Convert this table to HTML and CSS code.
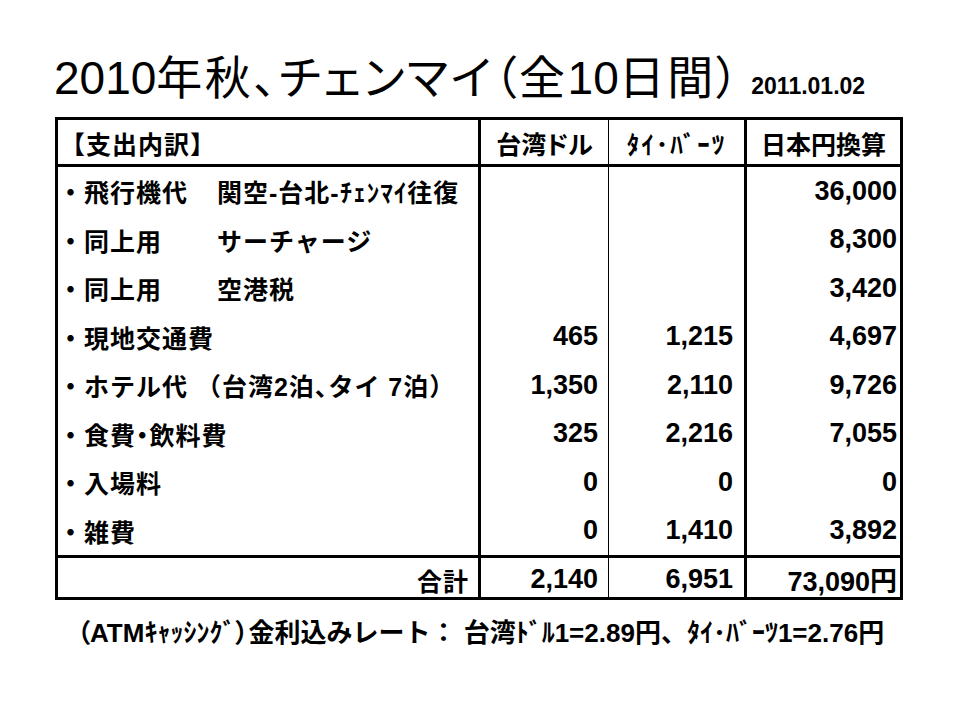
FILE: index.html
```html
<!DOCTYPE html>
<html lang="ja">
<head>
<meta charset="utf-8">
<title>2010年秋、チェンマイ（全10日間）</title>
<link rel="stylesheet" href="styles.css">
</head>
<body>
<h1 class="title"><span class="title-main"><span class="tdig">2010</span>年秋、チェンマイ（全<span class="tdig">10</span>日間）</span><span class="date">2011.01.02</span></h1>
<div class="sheet">
  <div class="cell c1 head label-head">【支出内訳】</div>
  <div class="cell c2 head center prop">台湾ドル</div>
  <div class="cell c3 head center wide">ﾀｲ･ﾊﾞｰﾂ</div>
  <div class="cell c4 head center">日本円換算</div>

  <div class="cell c1"><span class="item">・飛行機代</span><span class="sub">関空-台北-ﾁｪﾝﾏｲ往復</span></div>
  <div class="cell c2 num"></div>
  <div class="cell c3 num"></div>
  <div class="cell c4 num">36,000</div>

  <div class="cell c1"><span class="item">・同上用</span><span class="sub">サーチャージ</span></div>
  <div class="cell c2 num"></div>
  <div class="cell c3 num"></div>
  <div class="cell c4 num">8,300</div>

  <div class="cell c1"><span class="item">・同上用</span><span class="sub">空港税</span></div>
  <div class="cell c2 num"></div>
  <div class="cell c3 num"></div>
  <div class="cell c4 num">3,420</div>

  <div class="cell c1"><span>・現地交通費</span></div>
  <div class="cell c2 num">465</div>
  <div class="cell c3 num">1,215</div>
  <div class="cell c4 num">4,697</div>

  <div class="cell c1"><span>・ホテル代 （台湾2泊<span class="prop">、</span>タイ 7泊）</span></div>
  <div class="cell c2 num">1,350</div>
  <div class="cell c3 num">2,110</div>
  <div class="cell c4 num">9,726</div>

  <div class="cell c1"><span>・食費<span class="prop">・</span>飲料費</span></div>
  <div class="cell c2 num">325</div>
  <div class="cell c3 num">2,216</div>
  <div class="cell c4 num">7,055</div>

  <div class="cell c1"><span>・入場料</span></div>
  <div class="cell c2 num">0</div>
  <div class="cell c3 num">0</div>
  <div class="cell c4 num">0</div>

  <div class="cell c1 last"><span>・雑費</span></div>
  <div class="cell c2 num last">0</div>
  <div class="cell c3 num last">1,410</div>
  <div class="cell c4 num last">3,892</div>

  <div class="cell c1 total">合計</div>
  <div class="cell c2 num total">2,140</div>
  <div class="cell c3 num total">6,951</div>
  <div class="cell c4 num total">73,090円</div>
</div>
<p class="note"><span class="prop">（</span>ATMｷｬｯｼﾝｸﾞ<span class="prop">）</span>金利込みレート： 台湾ﾄﾞﾙ1=2.89円、ﾀｲ･ﾊﾞｰﾂ1=2.76円</p>
</body>
</html>
```

FILE: styles.css
```css
html, body {
  margin: 0;
  padding: 0;
  background: #ffffff;
  color: #000000;
}

body {
  width: 960px;
  height: 720px;
  font-family: "Liberation Sans", "Noto Sans CJK JP", sans-serif;
}

.title {
  margin: 0;
  padding: 52px 0 0 54px;
  height: 52px;
  line-height: 52px;
  font-size: 46px;
  font-weight: normal;
  white-space: nowrap;
}

.title-main {
  font-feature-settings: "palt";
  letter-spacing: 2.5px;
}

.tdig {
  letter-spacing: 0;
}

.date {
  font-size: 23px;
  font-weight: bold;
  margin-left: 10px;
}

.sheet {
  box-sizing: border-box;
  margin: 13px 0 0 55px;
  width: 848px;
  display: grid;
  grid-template-columns: 423px 128px 138px 156px;
  grid-template-rows: 47px repeat(7, 48.5px) 51.5px 42px;
  border-left: 3px solid #000;
  border-top: 3px solid #000;
  font-weight: bold;
  font-size: 25px;
}

.cell {
  box-sizing: border-box;
  display: flex;
  align-items: center;
  white-space: nowrap;
  border-right: 3px solid #000;
}

.c2 {
  border-right: 1px solid #000;
  padding-right: 10px;
}

.c3 {
  padding-right: 11px;
}

.c4 {
  padding-right: 3px;
}

.head {
  border-bottom: 3px solid #000;
  padding-top: 1px;
}

.label-head {
  padding-left: 2px;
}

.center {
  justify-content: center;
  padding-right: 0;
}

.prop {
  font-feature-settings: "palt";
}

.wide {
  letter-spacing: 2px;
}

.c1 {
  letter-spacing: 1px;
}

.item {
  display: inline-block;
  width: 159px;
}

.num {
  justify-content: flex-end;
  font-size: 27px;
}

.last {
  border-bottom: 3px solid #000;
}

.total {
  border-bottom: 3px solid #000;
  padding-top: 4px;
}

.c1.total {
  justify-content: flex-end;
  padding-right: 9px;
}

.note {
  margin: 18px 0 0 77px;
  font-size: 26px;
  font-weight: bold;
  line-height: 30px;
  white-space: nowrap;
}
```
